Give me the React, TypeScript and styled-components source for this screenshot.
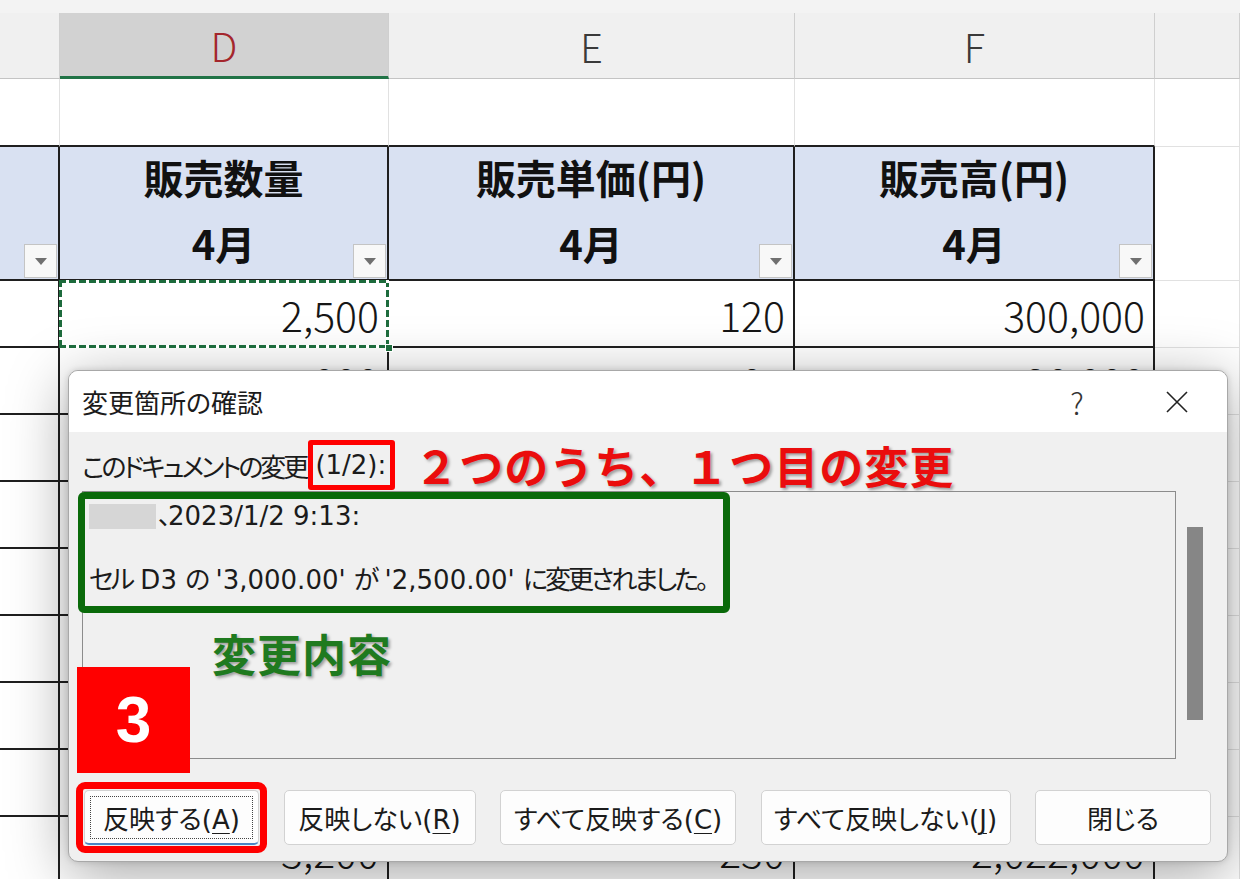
import React from "react";
import styled, { createGlobalStyle, css } from "styled-components";

const GlobalStyle = createGlobalStyle`
  html, body {
    margin: 0;
    padding: 0;
    background: #fff;
  }
  body {
    width: 1240px;
    height: 879px;
    overflow: hidden;
  }
`;

const Page = styled.div`
  position: relative;
  width: 1240px;
  height: 879px;
  overflow: hidden;
  font-family: "Noto Sans CJK JP", sans-serif;
  color: #111;
`;

/* ---------- spreadsheet behind the dialog ---------- */

const Sheet = styled.div`
  display: grid;
  grid-template-columns: 60px 329px 406px 360px 1fr;
  grid-template-rows: 13px 66px 68px 134px repeat(9, 67px);
`;

const TopBand = styled.div`
  grid-column: 1 / -1;
  background: #f3f3f3;
`;

const ColHead = styled.div<{ $selected?: boolean }>`
  display: flex;
  align-items: center;
  justify-content: center;
  box-sizing: border-box;
  background: ${(p) => (p.$selected ? "#d2d2d2" : "#f0f0f0")};
  border-right: 1px solid #cfcfcf;
  border-bottom: ${(p) => (p.$selected ? "3px solid #217346" : "1px solid #c4c4c4")};
  color: ${(p) => (p.$selected ? "#a4262c" : "#3a3a3a")};
  font-size: 40px;
  font-weight: 300;
`;

const GridCell = styled.div<{ $tableTop?: boolean }>`
  box-sizing: border-box;
  background: #fff;
  border-right: 1px solid #e1e1e1;
  border-bottom: ${(p) => (p.$tableTop ? "2px solid #1f1f1f" : "1px solid #e1e1e1")};
`;

const HeadCell = styled.div`
  position: relative;
  display: flex;
  flex-direction: column;
  align-items: center;
  justify-content: center;
  box-sizing: border-box;
  padding-bottom: 6px;
  background: #d9e1f2;
  border-right: 2px solid #1f1f1f;
  border-bottom: 2px solid #1f1f1f;
  font-size: 40px;
  font-weight: 700;
  color: #111;
`;

const HeadLine = styled.div`
  flex-shrink: 0;
  height: 66px;
  display: flex;
  align-items: center;
`;

const FilterButton = styled.div`
  position: absolute;
  right: 1px;
  bottom: 1px;
  width: 33px;
  height: 34px;
  box-sizing: border-box;
  display: flex;
  align-items: center;
  justify-content: center;
  background: #f8f8f8;
  border: 1px solid #c4c4c4;

  &::after {
    content: "";
    border-left: 6px solid transparent;
    border-right: 6px solid transparent;
    border-top: 7px solid #707070;
  }
`;

const ants = (dir: string) =>
  `repeating-linear-gradient(${dir}, #1d6b3c 0 7px, #ffffff 7px 10px)`;

const DataCell = styled.div<{ $marked?: boolean }>`
  position: relative;
  display: flex;
  align-items: center;
  justify-content: flex-end;
  box-sizing: border-box;
  padding-right: 8px;
  background: #fff;
  border-right: 2px solid #1f1f1f;
  border-bottom: 2px solid #1f1f1f;
  font-size: 41px;
  font-weight: 300;
  color: #161616;

  ${(p) =>
    p.$marked &&
    css`
      &::after {
        content: "";
        position: absolute;
        inset: -1px -2px -2px -1px;
        z-index: 2;
        background:
          ${ants("90deg")} top left / 100% 3px no-repeat,
          ${ants("90deg")} bottom left / 100% 3px no-repeat,
          ${ants("180deg")} top left / 3px 100% no-repeat,
          ${ants("180deg")} top right / 3px 100% no-repeat;
      }
      &::before {
        content: "";
        position: absolute;
        right: -6px;
        bottom: -6px;
        width: 6px;
        height: 6px;
        background: #1d6b3c;
        border: 1px solid #fff;
        z-index: 3;
      }
    `}
`;

/* ---------- dialog ---------- */

const Dialog = styled.div`
  position: absolute;
  left: 68px;
  top: 370px;
  width: 1160px;
  height: 492px;
  box-sizing: border-box;
  display: flex;
  flex-direction: column;
  background: #f0f0f0;
  border: 1px solid #a8a8a8;
  border-radius: 10px;
  box-shadow: 0 12px 60px rgba(0, 0, 0, 0.36), 0 0 6px rgba(0, 0, 0, 0.15);
  font-family: "DejaVu Sans", "Noto Sans CJK JP", sans-serif;
  font-feature-settings: "palt";
  font-size: 26px;
  color: #1b1b1b;
`;

const TitleBar = styled.div`
  height: 61px;
  display: flex;
  align-items: center;
  background: #fff;
  border-radius: 9px 9px 0 0;
  padding-left: 13px;
`;

const Title = styled.div`
  flex: 1;
  font-family: "Noto Sans CJK JP", sans-serif;
`;

const CaptionButton = styled.div`
  width: 100px;
  height: 100%;
  display: flex;
  align-items: center;
  justify-content: center;
  color: #333;
  font-family: "Noto Sans CJK JP", sans-serif;
  font-size: 30px;
  font-weight: 300;
`;

const Body = styled.div`
  flex: 1;
  display: flex;
  flex-direction: column;
  padding-left: 13px;
`;

const Jp = styled.span`
  letter-spacing: -3px;
`;

const LabelRow = styled.div`
  margin-top: 8px;
  height: 50px;
  display: flex;
  align-items: center;
  white-space: nowrap;
`;

const CountBox = styled.span`
  display: inline-flex;
  align-items: center;
  height: 50px;
  box-sizing: border-box;
  margin-left: 2px;
  padding: 0 4px 0 2px;
  border: 5px solid #ff0000;
  border-radius: 3px;
`;

const Note = styled.span<{ $color: string }>`
  font-family: "Noto Sans CJK JP", sans-serif;
  font-feature-settings: normal;
  font-size: 44px;
  font-weight: 700;
  line-height: 1;
  color: ${(p) => p.$color};
  text-shadow: 2px 2px 3px rgba(0, 0, 0, 0.35);
`;

const RedNote = styled(Note)`
  margin-left: 19px;
  letter-spacing: 1px;
`;

const ListRow = styled.div`
  margin-top: 1px;
  height: 268px;
  display: flex;
`;

const ListBox = styled.div`
  position: relative;
  width: 1094px;
  box-sizing: border-box;
  border: 1px solid #8c8c8c;
  padding: 8px 0 0 6px;
  line-height: 32px;
  white-space: nowrap;
`;

const Redacted = styled.span`
  display: inline-block;
  width: 67px;
  height: 25px;
  margin-right: 2px;
  vertical-align: -4px;
  background: #d6d6d6;
`;

const GreenFrame = styled.div`
  position: absolute;
  left: -5px;
  top: 0;
  width: 652px;
  height: 121px;
  box-sizing: border-box;
  border: 7px solid #0a6a0a;
  border-radius: 6px;
`;

const GreenNote = styled(Note)`
  position: absolute;
  left: 129px;
  top: 139px;
  letter-spacing: 1px;
`;

const ScrollTrack = styled.div`
  margin-left: 11px;
  width: 16px;
  padding-top: 36px;
`;

const ScrollThumb = styled.div`
  height: 193px;
  background: #868686;
`;

const Badge = styled.div`
  position: absolute;
  left: 8px;
  top: 296px;
  width: 113px;
  height: 106px;
  display: flex;
  align-items: center;
  justify-content: center;
  background: #ff0000;
  color: #fff;
  font-family: "Liberation Sans", sans-serif;
  font-size: 64px;
  font-weight: 700;
`;

const ButtonRow = styled.div`
  margin-top: 31px;
  height: 55px;
  display: grid;
  grid-template-columns: 175px 192px 236px 250px 176px;
  column-gap: 24.5px;
  padding-left: 2px;
`;

const Button = styled.button<{ $focused?: boolean }>`
  position: relative;
  display: flex;
  align-items: center;
  justify-content: center;
  box-sizing: border-box;
  padding: 0;
  font: inherit;
  color: inherit;
  white-space: nowrap;
  background: #fdfdfd;
  border: 1px solid #d2d2d2;
  border-radius: 5px;

  u {
    text-underline-offset: 4px;
    text-decoration-thickness: 1px;
  }

  ${(p) =>
    p.$focused &&
    css`
      border-bottom: 2px solid #4a86c5;
      &::after {
        content: "";
        position: absolute;
        inset: 5px 5px 4px 5px;
        border: 1px dotted #444;
      }
    `}
`;

const RedOutline = styled.span`
  position: absolute;
  inset: -9px -9px -10px -9px;
  border: 7px solid #ff0000;
  border-radius: 9px;
  pointer-events: none;
`;

const CloseIcon = () => (
  <svg width="24" height="24" viewBox="0 0 24 24">
    <path d="M2 2 L22 22 M22 2 L2 22" stroke="#222" strokeWidth="1.6" fill="none" />
  </svg>
);

const headers = [
  { title: "販売数量", month: "4月" },
  { title: "販売単価(円)", month: "4月" },
  { title: "販売高(円)", month: "4月" },
];

const rows: string[][] = [
  ["2,500", "120", "300,000"],
  ["4,000", "105", "420,000"],
  ["", "", ""],
  ["", "", ""],
  ["", "", ""],
  ["", "", ""],
  ["", "", ""],
  ["", "", ""],
  ["3,200", "230", "2,022,000"],
];

const buttons = [
  { label: "反映する(", key: "A" },
  { label: "反映しない(", key: "R" },
  { label: "すべて反映する(", key: "C" },
  { label: "すべて反映しない(", key: "J" },
];

export default function App() {
  return (
    <Page>
      <GlobalStyle />
      <Sheet>
        <TopBand />
        <ColHead />
        <ColHead $selected>D</ColHead>
        <ColHead>E</ColHead>
        <ColHead>F</ColHead>
        <ColHead />

        <GridCell $tableTop />
        <GridCell $tableTop />
        <GridCell $tableTop />
        <GridCell $tableTop />
        <GridCell />

        <HeadCell>
          <FilterButton />
        </HeadCell>
        {headers.map((h) => (
          <HeadCell key={h.title}>
            <HeadLine>{h.title}</HeadLine>
            <HeadLine>{h.month}</HeadLine>
            <FilterButton />
          </HeadCell>
        ))}
        <GridCell />

        {rows.map((r, i) => (
          <React.Fragment key={i}>
            <DataCell />
            {r.map((v, j) => (
              <DataCell key={j} $marked={i === 0 && j === 0}>
                {v}
              </DataCell>
            ))}
            <GridCell />
          </React.Fragment>
        ))}
      </Sheet>

      <Dialog>
        <TitleBar>
          <Title>変更箇所の確認</Title>
          <CaptionButton>?</CaptionButton>
          <CaptionButton>
            <CloseIcon />
          </CaptionButton>
        </TitleBar>
        <Body>
          <LabelRow>
            <Jp>このドキュメントの変更</Jp>
            <CountBox>(1/2):</CountBox>
            <RedNote $color="#ea0d0d">２つのうち、１つ目の変更</RedNote>
          </LabelRow>
          <ListRow>
            <ListBox>
              <div>
                <Redacted />
                <Jp>、</Jp>2023/1/2 9:13:
              </div>
              <div>&nbsp;</div>
              <div>
                <Jp>セル</Jp>&nbsp;D3 <Jp>の</Jp> '3,000.00' <Jp>が</Jp> '2,500.00'{" "}
                <Jp>に変更されました。</Jp>
              </div>
              <GreenFrame />
              <GreenNote $color="#1f7a1f">変更内容</GreenNote>
            </ListBox>
            <ScrollTrack>
              <ScrollThumb />
            </ScrollTrack>
          </ListRow>
          <ButtonRow>
            {buttons.map((b, i) => (
              <Button key={b.key} $focused={i === 0}>
                <span>
                  {b.label}
                  <u>{b.key}</u>)
                </span>
                {i === 0 && <RedOutline />}
              </Button>
            ))}
            <Button>閉じる</Button>
          </ButtonRow>
        </Body>
        <Badge>3</Badge>
      </Dialog>
    </Page>
  );
}
